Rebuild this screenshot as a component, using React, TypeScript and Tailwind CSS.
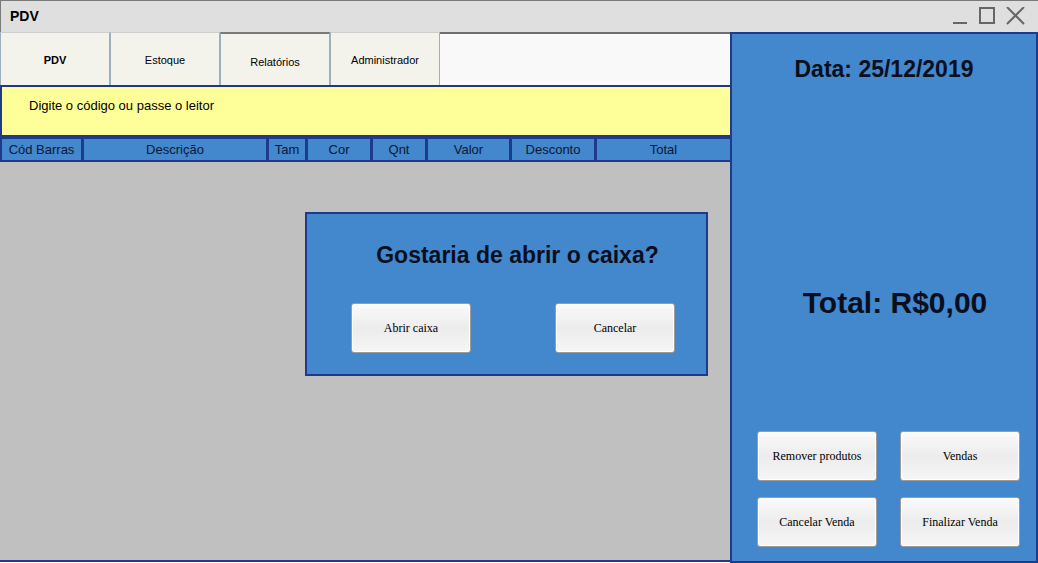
import React from "react";

const sans = { fontFamily: '"Liberation Sans", Arial, sans-serif' };
const serif = { fontFamily: '"Liberation Serif", "Times New Roman", serif' };

function Btn({ label }: { label: string }) {
  return (
    <div
      className="w-[120px] h-[50px] flex items-center justify-center rounded-[3px] border border-[#9c9c9c] bg-gradient-to-b from-[#fbfbfb] via-[#ececec] to-[#f6f6f6] text-[12px] text-black shadow-[inset_0_0_0_1px_#ffffff]"
      style={serif}
    >
      {label}
    </div>
  );
}

const cols: { label: string; w: string }[] = [
  { label: "Cód Barras", w: "w-[79px]" },
  { label: "Descrição", w: "w-[182px]" },
  { label: "Tam", w: "w-[36px]" },
  { label: "Cor", w: "w-[62px]" },
  { label: "Qnt", w: "w-[52px]" },
  { label: "Valor", w: "w-[81px]" },
  { label: "Desconto", w: "w-[82px]" },
  { label: "Total", w: "flex-1" },
];

export default function App() {
  return (
    <div className="w-[1038px] h-[563px] flex flex-col overflow-hidden bg-white" style={sans}>
      {/* Title bar */}
      <div className="h-[32px] shrink-0 flex items-center bg-[#dfdfdf] border-t border-l border-[#7a7a7a]">
        <span className="ml-[9px] text-[14px] font-bold text-black">PDV</span>
        <div className="ml-auto flex items-center mr-[13px] mt-[1px]">
          <svg width="72" height="20" viewBox="0 0 72 20">
            <line x1="0" y1="16" x2="14" y2="16" stroke="#666" strokeWidth="2" />
            <rect x="27" y="1" width="14" height="15" fill="none" stroke="#666" strokeWidth="2" />
            <line x1="54" y1="0" x2="71" y2="17" stroke="#666" strokeWidth="2" />
            <line x1="71" y1="0" x2="54" y2="17" stroke="#666" strokeWidth="2" />
          </svg>
        </div>
      </div>

      <div className="flex flex-1 min-h-0">
        {/* Left column */}
        <div className="w-[730px] flex flex-col">
          {/* Tabs */}
          <div className="h-[53px] flex shrink-0">
            {["PDV", "Estoque", "Relatórios", "Administrador"].map((t, i) => (
              <div
                key={t}
                className={`w-[110px] flex items-center justify-center bg-[#f3f3eb] border-l border-r border-[#9bb0bf] text-[11px] text-black ${
                  i === 2 ? "border-t-2 border-t-[#7a7a7a] pt-[6px]" : "border-t border-t-[#cfcfcf] pt-[2px]"
                } ${i === 0 ? "font-bold" : ""}`}
              >
                {t}
              </div>
            ))}
            <div className="flex-1 bg-[#f9f9f9] border-t-2 border-[#6f6f6f]" />
          </div>
          {/* Yellow input */}
          <div className="h-[52px] shrink-0 bg-[#ffff99] border-2 border-r-0 border-[#1f3a8a] pl-[27px] pt-[9px] text-[13px] text-black">
            Digite o código ou passe o leitor
          </div>
          {/* Column header */}
          <div className="h-[25px] shrink-0 flex gap-[3px] bg-[#1f3a8a] px-[2px] py-[2px] -mr-[2px]">
            {cols.map((c) => (
              <div
                key={c.label}
                className={`${c.w} bg-[#4387cc] flex items-center justify-center text-[13px] text-[#0c1836]`}
              >
                {c.label}
              </div>
            ))}
          </div>
          {/* Grid area */}
          <div className="relative flex-1 bg-[#c0c0c0] border-b-2 border-[#1f3a8a] mb-[1px]">
            <div className="absolute left-[305px] top-[50px] w-[403px] h-[164px] bg-[#4387cc] border-2 border-[#1f3a8a]">
              <div className="pl-[22px] pt-[28px] text-center text-[23px] font-bold text-[#0a0f1e] leading-[26px]">
                Gostaria de abrir o caixa?
              </div>
              <div className="flex mt-[35px] pl-[44px] gap-[84px]">
                <Btn label="Abrir caixa" />
                <Btn label="Cancelar" />
              </div>
            </div>
          </div>
        </div>

        {/* Right panel */}
        <div className="flex-1 bg-[#4387cc] border-2 border-[#1f3a8a] flex flex-col">
          <div className="mt-[22px] text-center text-[23px] font-bold leading-[26px] text-[#0a0f1e]">
            Data: 25/12/2019
          </div>
          <div className="mt-[204px] pl-[22px] text-center text-[30px] font-bold leading-[34px] text-[#0a0f1e]">
            Total: R$0,00
          </div>
          <div className="mt-auto mb-[14px] pl-[25px] grid grid-cols-[120px_120px] gap-x-[23px] gap-y-[16px]">
            <Btn label="Remover produtos" />
            <Btn label="Vendas" />
            <Btn label="Cancelar Venda" />
            <Btn label="Finalizar Venda" />
          </div>
        </div>
      </div>
    </div>
  );
}
